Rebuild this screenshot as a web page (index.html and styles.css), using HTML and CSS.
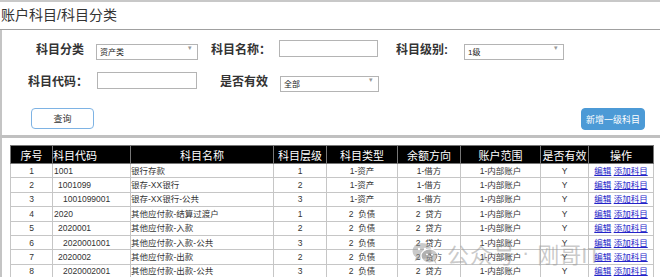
FILE: index.html
```html
<!DOCTYPE html>
<html lang="zh-CN">
<head>
    <meta charset="UTF-8">
    <meta name="viewport" content="width=device-width, initial-scale=1.0">
    <title>账户科目</title>
    <link rel="stylesheet" href="styles.css">
</head>
<body>
    <div class="page">
        <div class="title">账户科目/科目分类</div>
        <div class="main">
            <form class="filter">
                <div class="row row1">
                    <label class="lbl l1">科目分类</label>
                    <span class="sel w102"><select><option>资产类</option></select></span>
                    <label class="lbl l2">科目名称：</label>
                    <input class="txt w99" type="text">
                    <label class="lbl l3">科目级别:</label>
                    <span class="sel w100"><select><option>1级</option></select></span>
                </div>
                <div class="row row2">
                    <label class="lbl l4">科目代码：</label>
                    <input class="txt w100" type="text">
                    <label class="lbl l5">是否有效</label>
                    <span class="sel w99"><select><option>全部</option></select></span>
                </div>
                <div class="btns">
                    <button type="button" class="btn">查询</button>
                    <button type="button" class="btn primary">新增一级科目</button>
                </div>
            </form>
            <div class="sep"></div>
            <table class="grid">
                <colgroup>
                    <col style="width:42px"><col style="width:78px"><col style="width:143px">
                    <col style="width:53px"><col style="width:71px"><col style="width:63px">
                    <col style="width:80px"><col style="width:48px"><col style="width:65px">
                </colgroup>
                <thead>
                    <tr>
                        <th>序号</th><th class="left">科目代码</th><th>科目名称</th><th>科目层级</th>
                        <th>科目类型</th><th>余额方向</th><th>账户范围</th><th>是否有效</th><th>操作</th>
                    </tr>
                </thead>
                <tbody>
                    <tr><td>1</td><td class="code lv1">1001</td><td class="name">银行存款</td><td>1</td><td>1-资产</td><td>1-借方</td><td>1-内部账户</td><td>Y</td><td><a href="#">编辑</a> <a href="#">添加科目</a></td></tr>
                    <tr><td>2</td><td class="code lv2">1001099</td><td class="name">银存-XX银行</td><td>2</td><td>1-资产</td><td>1-借方</td><td>1-内部账户</td><td>Y</td><td><a href="#">编辑</a> <a href="#">添加科目</a></td></tr>
                    <tr><td>3</td><td class="code lv3">1001099001</td><td class="name">银存-XX银行-公共</td><td>3</td><td>1-资产</td><td>1-借方</td><td>1-内部账户</td><td>Y</td><td><a href="#">编辑</a> <a href="#">添加科目</a></td></tr>
                    <tr><td>4</td><td class="code lv1">2020</td><td class="name">其他应付款-结算过渡户</td><td>1</td><td>2&nbsp; 负债</td><td>2&nbsp; 贷方</td><td>1-内部账户</td><td>Y</td><td><a href="#">编辑</a> <a href="#">添加科目</a></td></tr>
                    <tr><td>5</td><td class="code lv2">2020001</td><td class="name">其他应付款-入款</td><td>2</td><td>2&nbsp; 负债</td><td>2&nbsp; 贷方</td><td>1-内部账户</td><td>Y</td><td><a href="#">编辑</a> <a href="#">添加科目</a></td></tr>
                    <tr><td>6</td><td class="code lv3">2020001001</td><td class="name">其他应付款-入款-公共</td><td>3</td><td>2&nbsp; 负债</td><td>2&nbsp; 贷方</td><td>1-内部账户</td><td>Y</td><td><a href="#">编辑</a> <a href="#">添加科目</a></td></tr>
                    <tr><td>7</td><td class="code lv2">2020002</td><td class="name">其他应付款-出款</td><td>2</td><td>2&nbsp; 负债</td><td>2&nbsp; 贷方</td><td>1-内部账户</td><td>Y</td><td><a href="#">编辑</a> <a href="#">添加科目</a></td></tr>
                    <tr><td>8</td><td class="code lv3">2020002001</td><td class="name">其他应付款-出款-公共</td><td>3</td><td>2&nbsp; 负债</td><td>2&nbsp; 贷方</td><td>1-内部账户</td><td>Y</td><td><a href="#">编辑</a> <a href="#">添加科目</a></td></tr>
                </tbody>
            </table>
        </div>
        <!-- watermark over the table -->
        <div class="watermark">
            <svg width="27" height="23" viewBox="0 0 27 23">
                <ellipse cx="10" cy="9" rx="9.5" ry="8" fill="currentColor"/>
                <path d="M4 15 L2.5 19.5 L8 16.5 Z" fill="currentColor"/>
                <ellipse cx="17.5" cy="14" rx="8.5" ry="7" fill="currentColor" stroke="#fff" stroke-width="1.2"/>
                <path d="M22 19.5 L24.5 22.5 L23.5 18 Z" fill="currentColor"/>
                <circle cx="7" cy="7" r="1.2" fill="#fff"/>
                <circle cx="13" cy="7" r="1.2" fill="#fff"/>
                <circle cx="15" cy="12.5" r="1" fill="#fff"/>
                <circle cx="20" cy="12.5" r="1" fill="#fff"/>
            </svg>
            <span class="wm-a">公众号</span>
            <span class="wm-dot">·</span>
            <span class="wm-b">刚哥IT</span>
        </div>
    </div>
</body>
</html>
```

FILE: styles.css
```css
body{
    margin: 0;
    font-family: "Liberation Sans", "Noto Sans CJK SC", sans-serif;
    color: #333;
    background: #fff;
}
.page{
    position: relative;
    width: 660px;
    overflow: hidden;
    border-top: 2px solid #c8c8c8;
}
.title{
    height: 27px;
    line-height: 27px;
    font-size: 14px;
    padding-left: 1px;
    border-bottom: 1px solid #a0a0a0;
}
.main{
    border-left: 2px solid #c4c4c4;
    padding-bottom: 4px;
}

/* search form */
.filter{
    padding-top: 10px;
}
.row{
    display: flex;
    align-items: center;
    height: 17px;
}
.row2{
    margin-top: 15px;
}
.lbl{
    font-size: 12px;
    font-weight: bold;
    text-align: right;
    color: #333;
    white-space: nowrap;
}
.l1{ width: 82px; margin-right: 12px; }
.l2{ width: 73px; margin-right: 8px; }
.l3{ width: 70px; margin-right: 16px; }
.l4{ width: 86px; margin-right: 9px; }
.l5{ width: 71px; margin-right: 12px; }
.txt{
    box-sizing: border-box;
    height: 17px;
    border: 1px solid #b4b4b4;
    background: #fff;
    padding: 0 3px;
    margin: 0;
}
.sel{
    position: relative;
    display: inline-block;
    height: 16px;
}
.sel select{
    appearance: none;
    -webkit-appearance: none;
    box-sizing: border-box;
    width: 100%;
    height: 16px;
    margin: 0;
    padding: 0 0 0 3px;
    border: 1px solid #b4b4b4;
    border-radius: 0;
    background: #fff;
    font-family: inherit;
    font-size: 8px;
    color: #222;
}
.sel::after{
    content: "\25BE";
    position: absolute;
    right: 6px;
    top: 3px;
    font-size: 7px;
    color: #999;
}
.w99{ width: 99px; }
.w100{ width: 100px; }
.w102{ width: 102px; }

.btns{
    display: flex;
    justify-content: space-between;
    margin-top: 19px;
    padding: 0 15px 0 29px;
}
.btn{
    box-sizing: border-box;
    width: 63px;
    height: 21px;
    padding: 0;
    border: 1px solid #7eb3e4;
    border-radius: 4px;
    background: #fff;
    font-family: inherit;
    font-size: 9px;
    color: #333;
}
.btn.primary{
    width: 64px;
    height: 22px;
    border-color: #4c9ad6;
    background: #4c9ad6;
    color: #fff;
}
.sep{
    height: 3px;
    margin-top: 5px;
    margin-left: -2px;
    background: #c0c0c0;
}

/* table */
.grid{
    table-layout: fixed;
    border-collapse: collapse;
    width: 643px;
    margin: 7px 0 0 8px;
    font-size: 8.5px;
}
.grid th{
    height: 17px;
    padding: 0;
    background: #000;
    color: #fff;
    font-size: 11px;
    font-weight: normal;
    border: 1px solid #777;
    text-align: center;
}
.grid th.left{
    text-align: left;
}
.grid td{
    height: 13.4px;
    padding: 0;
    line-height: 12px;
    border: 1px solid #c6c6c6;
    text-align: center;
    white-space: nowrap;
    overflow: hidden;
}
.grid td.code, .grid td.name{
    text-align: left;
}
.grid td.lv1{ padding-left: 1px; }
.grid td.lv2{ padding-left: 5px; }
.grid td.lv3{ padding-left: 10px; }
.grid a{
    color: #2323c8;
}

.watermark{
    position: absolute;
    left: 412px;
    top: 235px;
    display: flex;
    align-items: center;
    color: rgba(150, 150, 150, 0.5);
    font-size: 22px;
    pointer-events: none;
}
.wm-a{
    margin-left: 8px;
    letter-spacing: 1px;
}
.wm-dot{
    margin-left: 6px;
}
.wm-b{
    margin-left: 8px;
}
```
